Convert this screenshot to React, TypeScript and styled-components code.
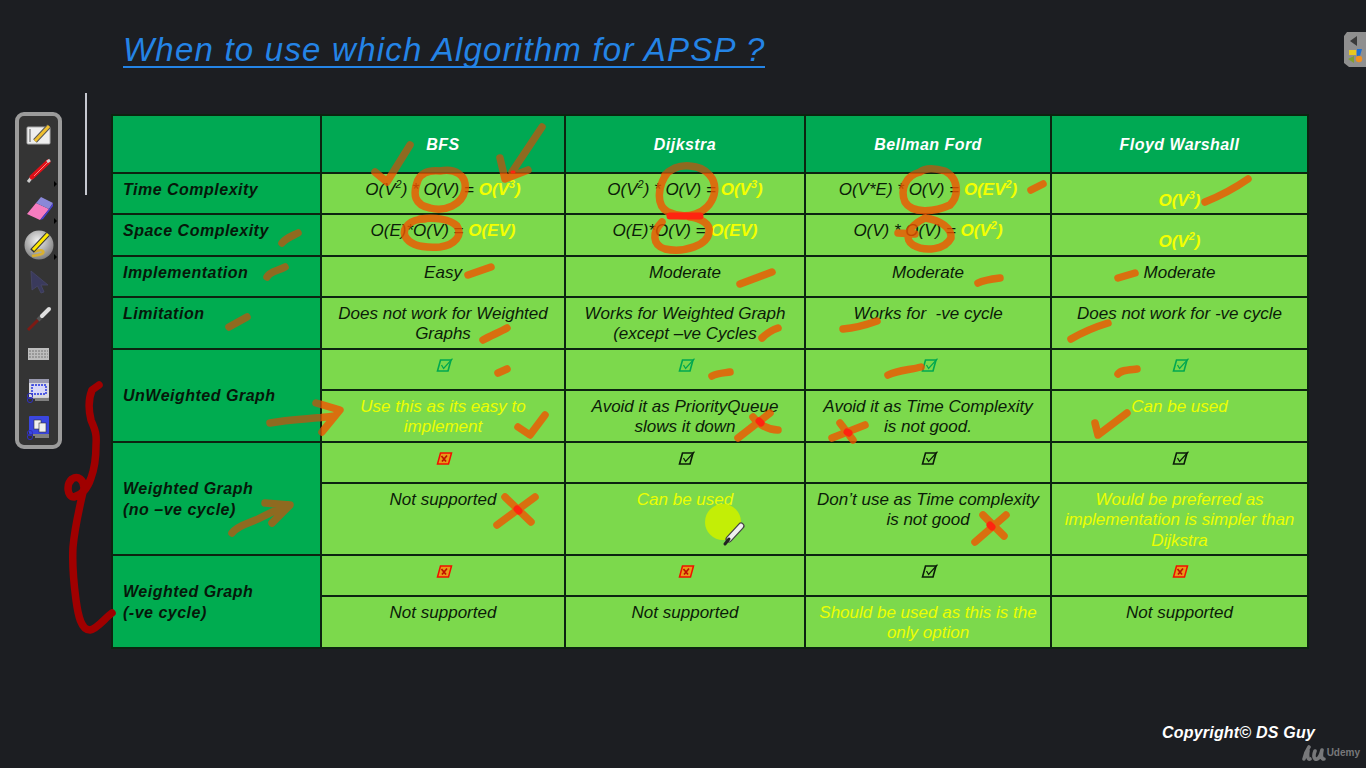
import React from "react";
import styled, { createGlobalStyle } from "styled-components";

const Global = createGlobalStyle`
  html, body { margin: 0; padding: 0; background: #1c1e22; }
  body { font-family: "Liberation Sans", Arial, sans-serif; overflow: hidden; }
`;

const Page = styled.div`
  position: relative;
  width: 1366px;
  height: 768px;
  background: #1c1e22;
  overflow: hidden;
  display: flex;
  flex-direction: column;
`;

const Title = styled.h1`
  margin: 30px 0 0 123px;
  align-self: flex-start;
  font-size: 33px;
  line-height: 39px;
  height: 36px;
  font-weight: 400;
  font-style: italic;
  letter-spacing: 1.22px;
  color: #2484e6;
  border-bottom: 2px solid #2484e6;
`;

const Table = styled.table`
  margin: 46px 0 0 111px;
  width: 1196px;
  height: 534px;
  table-layout: fixed;
  border-collapse: collapse;
  font-size: 17px;
  line-height: 20.5px;
  font-style: italic;
`;

const Tr = styled.tr<{ $h: number }>`
  height: ${(p) => p.$h}px;
`;

const Head = styled.th`
  background: #00a953;
  border: 2px solid #0c2410;
  color: #fff;
  font-size: 16px;
  font-weight: 700;
  letter-spacing: 0.45px;
  text-align: center;
  vertical-align: middle;
  padding: 2px 0 0;
`;

const Label = styled.th<{ $middle?: boolean }>`
  background: #00ac50;
  border: 2px solid #0c2410;
  color: #06180a;
  font-size: 16px;
  font-weight: 700;
  letter-spacing: 0.5px;
  text-align: left;
  vertical-align: ${(p) => (p.$middle ? "middle" : "top")};
  padding: ${(p) => (p.$middle ? "2px 4px 0 10px" : "6px 4px 0 10px")};
`;

const Cell = styled.td<{ $drop?: boolean; $tone?: "yes" }>`
  background: #7cd94c;
  border: 2px solid #0c2410;
  color: ${(p) => (p.$tone === "yes" ? "#ecff00" : "#0b1c08")};
  text-align: center;
  vertical-align: top;
  padding: ${(p) => (p.$drop ? "17px 6px 0" : "5.5px 6px 0")};
`;

const Mark = styled.td`
  background: #7cd94c;
  border: 2px solid #0c2410;
  text-align: center;
  vertical-align: top;
  padding: 7.5px 0 0 3px;
  line-height: 0;
`;

const Result = styled.b`
  color: #f4ff00;
  font-weight: 700;
`;

const Sup = styled.sup`
  font-size: 11px;
  line-height: 0;
`;

const Footer = styled.footer`
  margin-top: 74px;
  display: flex;
  flex-direction: column;
  align-items: flex-end;
`;

const Copyright = styled.div`
  margin-right: 51px;
  color: #fff;
  font-size: 16px;
  line-height: 20px;
  font-weight: 700;
  font-style: italic;
  letter-spacing: 0.2px;
`;

const Brand = styled.div`
  margin: 2px 6px 0 0;
  display: flex;
  align-items: center;
  gap: 1px;
  color: #77787a;
  font-size: 10px;
  font-weight: 700;
  line-height: 16px;
`;

const Ink = styled.svg`
  position: absolute;
  left: 0;
  top: 0;
  pointer-events: none;
`;

const Rule = styled.div`
  position: absolute;
  left: 85px;
  top: 93px;
  width: 2px;
  height: 102px;
  background: #c6c8d0;
`;

const Toolbar = styled.nav`
  position: absolute;
  left: 15px;
  top: 112px;
  width: 47px;
  height: 337px;
  box-sizing: border-box;
  border: 4px solid #9b9b9b;
  border-radius: 9px;
  background: #343434;
  display: grid;
  grid-template-rows: repeat(9, 36.3px);
  justify-items: center;
  align-items: center;
  padding: 2px 0 0;
`;

const Tool = styled.div<{ $more?: boolean }>`
  position: relative;
  width: 32px;
  height: 32px;
  &::after {
    content: "";
    display: ${(p) => (p.$more ? "block" : "none")};
    position: absolute;
    right: -2px;
    bottom: 1px;
    border-left: 3px solid #000;
    border-top: 3px solid transparent;
    border-bottom: 3px solid transparent;
  }
`;

const SideTab = styled.aside`
  position: absolute;
  right: 0;
  top: 32px;
  width: 22px;
  height: 35px;
  line-height: 0;
`;

const Box = ({ color = "#0b1c08" }: { color?: string }) => (
  <svg width="18" height="14" viewBox="0 0 18 14" fill="none">
    <path d="M1.5 13 L4.5 2 H15 L12 13 Z" stroke={color} strokeWidth="1.6" />
    <path d="M5.5 7 L7.6 10.5 L16.5 0.6" stroke={color} strokeWidth="1.3" />
  </svg>
);

const Cross = () => (
  <svg width="18" height="14" viewBox="0 0 18 14" fill="none">
    <path d="M1.5 13 L4.5 2 H15.5 L12.5 13 Z" fill="#e89a18" stroke="#f01000" strokeWidth="1.5" />
    <path d="M5.5 5 L10 10.5 M11 4.5 L6 10.5" stroke="#c01000" strokeWidth="1.7" />
  </svg>
);

const Big = ({ base, power }: { base: string; power: string }) => (
  <Result>
    {base}
    <Sup>{power}</Sup>)
  </Result>
);

const InkStrokes = () => (
  <>
    <path d="M375 172 L387 182 L410 145" />
    <path d="M542 127 L512 172 M500 158 L505 179 L528 170" />
    <path d="M418 180 C412 195 415 205 430 208 C445 212 462 205 465 190 C467 175 455 168 440 171 C430 170 422 172 418 180" />
    <path d="M425 219 C410 219 402 228 405 236 C410 246 425 248 440 247 C455 245 463 235 457 226 C450 219 435 217 420 219" />
    <path d="M468 275 L491 267" />
    <path d="M740 284 L772 272" />
    <path d="M483 340 C490 336 500 332 507 328" />
    <path d="M762 338 C768 332 772 330 778 328" />
    <path d="M668 172 C658 185 655 205 668 212 C685 220 708 215 714 195 C718 178 705 167 690 166 C680 165 672 168 665 175" />
    <path d="M662 222 C652 232 652 245 665 249 C685 253 708 245 709 232 C711 224 700 218 690 217" />
    <path d="M920 172 C905 176 900 190 905 202 C912 214 935 212 950 205 C960 195 958 178 945 171 C935 168 925 168 920 172" />
    <path d="M898 233 L915 234 M925 218 C940 220 952 228 951 238 C945 250 925 252 913 245 C905 240 905 228 925 218" />
    <path d="M1031 190 L1043 184" />
    <path d="M1205 202 C1220 196 1235 188 1248 179" />
    <path d="M978 283 C984 280 992 279 1000 278" />
    <path d="M1118 278 L1135 273" />
    <path d="M843 329 C855 328 866 325 877 321" />
    <path d="M1071 339 C1083 332 1095 327 1108 323" />
    <path d="M498 373 L507 369" />
    <path d="M712 376 C718 373 724 373 730 372" />
    <path d="M518 427 L530 435 L545 415" />
    <path d="M270 423 C290 419 312 419 335 416 M316 403 L340 410 L322 432" />
    <path d="M738 438 L770 413 M753 417 C758 424 768 430 778 430" />
    <path d="M497 525 L535 497 M505 497 L531 522" />
    <path d="M888 375 C898 370 910 370 921 367" />
    <path d="M1118 374 C1121 370 1128 370 1137 369" />
    <path d="M832 438 L865 425 M840 423 L853 440" />
    <path d="M1095 423 L1098 435 L1127 413" />
    <path d="M975 542 L1006 515 M983 515 L1004 536" />
    <path d="M282 243 C286 238 292 236 298 233" />
    <path d="M267 277 C270 271 278 271 285 267" />
    <path d="M229 327 L247 317" />
    <path d="M232 533 C238 525 250 523 258 519 C268 514 278 509 288 505 M265 503 L290 505 L272 523" />
  </>
);

const Tools = () => (
  <>
    <Tool>
      <svg width="32" height="32" viewBox="0 0 32 32">
        <rect x="4" y="7" width="23" height="17" rx="1" fill="#eee" stroke="#aaa" />
        <path d="M7 9 V22" stroke="#888" strokeWidth="1.5" />
        <path d="M12 21 L26 6" stroke="#555" strokeWidth="5" />
        <path d="M12 21 L26 6" stroke="#f0c030" strokeWidth="3" />
      </svg>
    </Tool>
    <Tool $more>
      <svg width="32" height="32" viewBox="0 0 32 32">
        <path d="M5 26 L9 21" stroke="#ccc" strokeWidth="3" />
        <path d="M9 21 L25 6" stroke="#e01018" strokeWidth="5" strokeLinecap="round" />
        <path d="M11 20 L24 7" stroke="#ff8080" strokeWidth="1" />
        <path d="M24 6 L27 4" stroke="#ccc" strokeWidth="3" />
      </svg>
    </Tool>
    <Tool $more>
      <svg width="32" height="32" viewBox="0 0 32 32">
        <path d="M4 21 L13 10 L26 16 L17 27 Z" fill="#f67cc0" />
        <path d="M13 10 L18 4 L30 10 L26 16 Z" fill="#8a88d8" />
        <path d="M26 16 L30 10 L30 13 L20 26 L17 27 Z" fill="#4a40d0" />
      </svg>
    </Tool>
    <Tool $more>
      <svg width="32" height="32" viewBox="0 0 32 32">
        <defs>
          <radialGradient id="disc" cx="0.45" cy="0.35" r="0.7">
            <stop offset="0" stopColor="#f0f0f0" />
            <stop offset="1" stopColor="#777" />
          </radialGradient>
        </defs>
        <circle cx="16" cy="16" r="14.5" fill="url(#disc)" />
        <path d="M11 23 C16 20 22 21 20 24 C17 27 12 26 9 27" stroke="#d8b030" strokeWidth="2.5" fill="none" />
        <path d="M9 22 L25 5" stroke="#333" strokeWidth="5" />
        <path d="M10 21 L25 5" stroke="#ffe800" strokeWidth="3" />
      </svg>
    </Tool>
    <Tool>
      <svg width="32" height="32" viewBox="0 0 32 32">
        <path d="M8 6 L25 20 L18 20 L21 27 L18 28 L14.5 21 L9 25 Z" fill="#3a3a5c" stroke="#48486a" strokeWidth="0.8" />
      </svg>
    </Tool>
    <Tool>
      <svg width="32" height="32" viewBox="0 0 32 32">
        <path d="M5 28 L15 18" stroke="#7c1a14" strokeWidth="3" />
        <path d="M15 18 L19 14" stroke="#555" strokeWidth="4" />
        <path d="M19 14 L26 7" stroke="#e0e0e0" strokeWidth="4" strokeLinecap="round" />
      </svg>
    </Tool>
    <Tool>
      <svg width="32" height="32" viewBox="0 0 32 32">
        <rect x="5" y="10" width="21" height="12" fill="#bdbdbd" />
        <path d="M6 13 H25 M6 16 H25 M6 19 H25" stroke="#777" strokeWidth="1" strokeDasharray="2 1" />
      </svg>
    </Tool>
    <Tool>
      <svg width="32" height="32" viewBox="0 0 32 32">
        <rect x="6" y="5" width="20" height="19" rx="1" fill="#d8d8e0" />
        <rect x="6" y="5" width="20" height="4" fill="#9a9ab0" />
        <rect x="9" y="11" width="14" height="9" fill="#d8d8f8" strokeDasharray="2 1" stroke="#2030e0" strokeWidth="1.4" />
        <path d="M10 24 H26 M12 26 H26" stroke="#ccc" strokeWidth="1" />
        <circle cx="7" cy="26" r="2.6" fill="none" stroke="#3030c0" />
        <circle cx="7" cy="22" r="2.6" fill="none" stroke="#3030c0" />
      </svg>
    </Tool>
    <Tool>
      <svg width="32" height="32" viewBox="0 0 32 32">
        <rect x="6" y="5" width="20" height="18" rx="1" fill="#3a46e0" />
        <rect x="11" y="9" width="7" height="9" fill="#f0f0f0" stroke="#333" strokeWidth="0.6" />
        <rect x="16" y="12" width="7" height="9" fill="#f0f0f0" stroke="#333" strokeWidth="0.6" />
        <path d="M10 24 H26 M12 26 H26" stroke="#ccc" strokeWidth="1" />
        <circle cx="7" cy="26" r="2.6" fill="none" stroke="#3030c0" />
        <circle cx="7" cy="22" r="2.6" fill="none" stroke="#3030c0" />
      </svg>
    </Tool>
  </>
);

export default function App() {
  return (
    <Page>
      <Global />
      <Title>When to use which Algorithm for APSP ?</Title>
      <Table>
        <colgroup>
          <col style={{ width: 209 }} />
          <col style={{ width: 244 }} />
          <col style={{ width: 240 }} />
          <col style={{ width: 246 }} />
          <col style={{ width: 257 }} />
        </colgroup>
        <tbody>
          <Tr $h={58}>
            <Head />
            <Head>BFS</Head>
            <Head>Dijkstra</Head>
            <Head>Bellman Ford</Head>
            <Head>Floyd Warshall</Head>
          </Tr>
          <Tr $h={41}>
            <Label>Time Complexity</Label>
            <Cell>O(V<Sup>2</Sup>) * O(V) = <Big base="O(V" power="3" /></Cell>
            <Cell>O(V<Sup>2</Sup>) * O(V) = <Big base="O(V" power="3" /></Cell>
            <Cell>O(V*E) * O(V) = <Big base="O(EV" power="2" /></Cell>
            <Cell $drop><Big base="O(V" power="3" /></Cell>
          </Tr>
          <Tr $h={42}>
            <Label>Space Complexity</Label>
            <Cell>O(E)*O(V) = <Result>O(EV)</Result></Cell>
            <Cell>O(E)*O(V) = <Result>O(EV)</Result></Cell>
            <Cell>O(V) * O(V) = <Big base="O(V" power="2" /></Cell>
            <Cell $drop><Big base="O(V" power="2" /></Cell>
          </Tr>
          <Tr $h={41}>
            <Label>Implementation</Label>
            <Cell>Easy</Cell>
            <Cell>Moderate</Cell>
            <Cell>Moderate</Cell>
            <Cell>Moderate</Cell>
          </Tr>
          <Tr $h={52}>
            <Label>Limitation</Label>
            <Cell>Does not work for Weighted Graphs</Cell>
            <Cell>Works for Weighted Graph (except –ve Cycles</Cell>
            <Cell>Works for &nbsp;-ve cycle</Cell>
            <Cell>Does not work for -ve cycle</Cell>
          </Tr>
          <Tr $h={41}>
            <Label $middle rowSpan={2}>UnWeighted Graph</Label>
            <Mark><Box color="#00a850" /></Mark>
            <Mark><Box color="#00a850" /></Mark>
            <Mark><Box color="#00a850" /></Mark>
            <Mark><Box color="#00a850" /></Mark>
          </Tr>
          <Tr $h={52}>
            <Cell $tone="yes">Use this as its easy to implement</Cell>
            <Cell>Avoid it as PriorityQueue slows it down</Cell>
            <Cell>Avoid it as Time Complexity<br />is not good.</Cell>
            <Cell $tone="yes">Can be used</Cell>
          </Tr>
          <Tr $h={41}>
            <Label $middle rowSpan={2}>Weighted Graph<br />(no –ve cycle)</Label>
            <Mark><Cross /></Mark>
            <Mark><Box /></Mark>
            <Mark><Box /></Mark>
            <Mark><Box /></Mark>
          </Tr>
          <Tr $h={72}>
            <Cell>Not supported</Cell>
            <Cell $tone="yes">Can be used</Cell>
            <Cell>Don’t use as Time complexity is not good</Cell>
            <Cell $tone="yes">Would be preferred as implementation is simpler than Dijkstra</Cell>
          </Tr>
          <Tr $h={41}>
            <Label $middle rowSpan={2}>Weighted Graph<br />(-ve cycle)</Label>
            <Mark><Cross /></Mark>
            <Mark><Cross /></Mark>
            <Mark><Box /></Mark>
            <Mark><Cross /></Mark>
          </Tr>
          <Tr $h={52}>
            <Cell>Not supported</Cell>
            <Cell>Not supported</Cell>
            <Cell $tone="yes">Should be used as this is the only option</Cell>
            <Cell>Not supported</Cell>
          </Tr>
        </tbody>
      </Table>
      <Footer>
        <Copyright>Copyright© DS Guy</Copyright>
        <Brand>
          <svg width="24" height="16" viewBox="0 0 24 16" fill="none" stroke="#77787a" strokeWidth="3.6" strokeLinecap="round">
            <path d="M2 14 C3 9 5 5 7 2 M6 6 C5 11 6 15 8 14" />
            <path d="M13 6 C11 11 12 15 15 14 C18 13 19 9 20 5 M20 5 C19 10 19 14 22 14" />
          </svg>
          Udemy
        </Brand>
      </Footer>

      <Ink width="1366" height="768" viewBox="0 0 1366 768" fill="none" strokeLinecap="round" strokeLinejoin="round">
        <defs>
          <clipPath id="darkCells">
            <rect x="112" y="115" width="1195" height="58" />
            <rect x="112" y="173" width="209" height="475" />
          </clipPath>
          <clipPath id="lightCells">
            <rect x="321" y="173" width="986" height="475" />
          </clipPath>
        </defs>
        <g clipPath="url(#darkCells)" stroke="#b35a14" strokeOpacity="0.8" strokeWidth="7.5">
          <InkStrokes />
        </g>
        <g clipPath="url(#lightCells)" stroke="#f05400" strokeOpacity="0.8" strokeWidth="7.5">
          <InkStrokes />
        </g>
        <g stroke="#ff2410" strokeWidth="7">
          <path d="M670 216 H700" />
          <path d="M759 421 L761 423 M517 509 L519 511 M847 432 L849 433 M990 525 L992 527" />
          <path d="M512 172 L514 172" strokeWidth="3" />
        </g>
        <path
          d="M99 385 L92 390 C88 400 89 412 91 420 C94 428 97 432 96 445 C96 460 94 470 91 478 C88 487 82 495 74 497 C67 497 66 484 72 479 C78 475 84 480 84 488 C80 505 75 525 73 547 C72 565 74 585 76 600 C78 615 81 630 90 630 C97 629 105 618 112 613"
          stroke="#a00000"
          strokeWidth="7.5"
        />
        <circle cx="723" cy="522" r="18" fill="#c3ee06" />
        <path d="M729 539 L741 526" stroke="#444" strokeWidth="7" />
        <path d="M729 539 L741 526" stroke="#f0f0f0" strokeWidth="4.5" />
        <path d="M725 544 L729 539" stroke="#222" strokeWidth="3" />
      </Ink>

      <Rule />
      <Toolbar>
        <Tools />
      </Toolbar>
      <SideTab>
        <svg width="22" height="35" viewBox="0 0 22 35">
          <path d="M3 0 H22 V35 H5 L0 31 V4 Z" fill="#8f8f8f" />
          <path d="M6 9 L13 4 V14 Z" fill="#3a3a3a" />
          <rect x="5" y="18" width="7" height="5" fill="#e8c820" />
          <path d="M13 17 H18 L16 24 H13 Z" fill="#2070d0" />
          <path d="M4 27 L10 24 V31 Z" fill="#80a030" />
          <circle cx="15" cy="27" r="3.2" fill="#f09020" />
        </svg>
      </SideTab>
    </Page>
  );
}
